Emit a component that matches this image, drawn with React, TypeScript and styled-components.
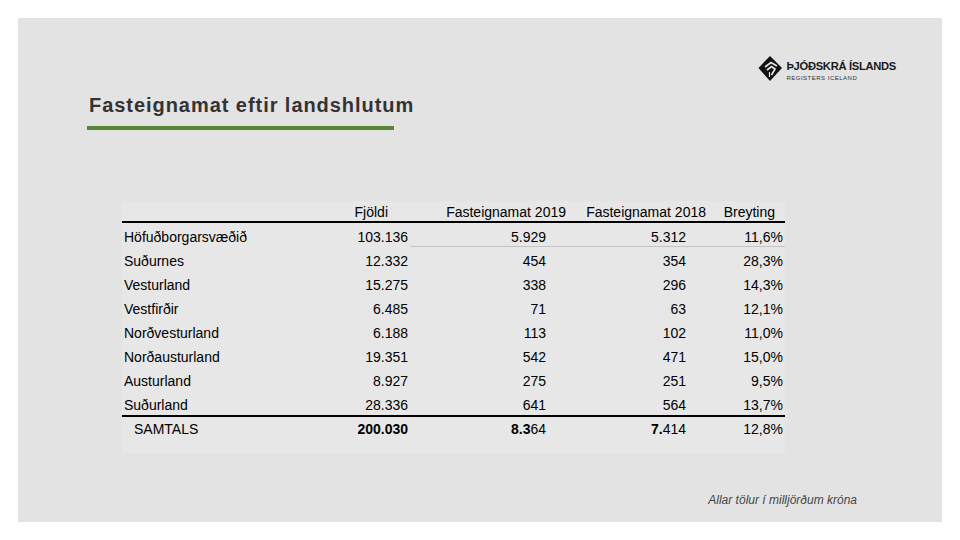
import React from "react";
import styled, { createGlobalStyle } from "styled-components";

const GlobalStyle = createGlobalStyle`
  html, body {
    margin: 0;
    padding: 0;
    background: #ffffff;
  }
  body {
    font-family: "Liberation Sans", Arial, sans-serif;
  }
`;

const Page = styled("div")`
  width: 960px;
  height: 540px;
  padding: 18px;
  box-sizing: border-box;
`;

const Slide = styled("div")`
  width: 924px;
  height: 504px;
  background: #e3e3e3;
  display: flex;
  flex-direction: column;
`;

const TopBar = styled("div")`
  display: flex;
  justify-content: flex-end;
  padding: 37px 46px 0 0;
  height: 27px;
`;

const Logo = styled("div")`
  display: flex;
  align-items: center;
  gap: 3px;
`;

const LogoText = styled("div")`
  display: flex;
  flex-direction: column;
  padding-top: 4px;
  color: #1a1a1a;
`;

const LogoName = styled("span")`
  font-size: 11.2px;
  font-weight: bold;
  letter-spacing: -0.3px;
  line-height: 12px;
`;

const LogoSub = styled("span")`
  font-size: 6px;
  letter-spacing: 0.5px;
  line-height: 8px;
  margin-top: 2px;
  color: #333;
`;

const TitleBlock = styled("div")`
  margin: 12px 0 0 69px;
`;

const Title = styled("h1")`
  margin: 0;
  font-size: 20px;
  line-height: 22px;
  font-weight: bold;
  letter-spacing: 0.95px;
  color: #333333;
  padding-left: 2px;
`;

const GreenBar = styled("div")`
  width: 307px;
  height: 4px;
  margin-top: 10px;
  background: #5b8639;
`;

const Table = styled("div")`
  margin: 71px 0 0 104px;
  width: 663px;
  padding-bottom: 12px;
  background: #e7e7e7;
  color: #000;
  font-size: 14px;
`;

const Row = styled("div")<{ $rule?: boolean; $head?: boolean }>`
  display: grid;
  grid-template-columns: 178px 110px 138px 140px 97px;
  height: ${(p) => (p.$head ? "20px" : "24px")};
  border-bottom: ${(p) => (p.$rule ? "2px solid #000" : "none")};
`;

const Cell = styled("div")<{ $label?: boolean; $indent?: number; $underline?: boolean; $top?: number }>`
  text-align: ${(p) => (p.$label ? "left" : "right")};
  padding: ${(p) => p.$top ?? 4}px 2px 0 ${(p) => (p.$label ? 2 + (p.$indent || 0) : 2)}px;
  line-height: 20px;
  white-space: nowrap;
  box-shadow: ${(p) => (p.$underline ? "inset 0 -1px 0 #c4c4c4" : "none")};
`;

const HeadCell = styled("div")<{ $nudge: number }>`
  text-align: right;
  padding: 3px 2px 0 0;
  line-height: 17px;
  white-space: nowrap;
  margin-right: ${(p) => -p.$nudge}px;
`;

const Strong = styled("b")`
  font-weight: bold;
`;

const Footer = styled("div")`
  margin-top: auto;
  align-self: flex-end;
  padding: 0 85px 15px 0;
  font-size: 12px;
  font-style: italic;
  color: #444;
`;

const LogoMark: React.FC = () => (
  <svg width="25" height="27" viewBox="0 0 25 27">
    <polygon points="12,1 24,13 12,26 0.5,13" fill="#111" />
    <path d="M7 12 L13 7.5 L19 11" stroke="#e3e3e3" strokeWidth="1.7" fill="none" />
    <path d="M9 15 L13.5 11.5 L17 14 L13.5 20" stroke="#e3e3e3" strokeWidth="1.7" fill="none" />
    <path d="M11.5 17 L11.5 22" stroke="#e3e3e3" strokeWidth="1.2" fill="none" />
  </svg>
);

type Region = {
  name: string;
  count: string;
  y2019: string;
  y2018: string;
  change: string;
};

const regions: Region[] = [
  { name: "Höfuðborgarsvæðið", count: "103.136", y2019: "5.929", y2018: "5.312", change: "11,6%" },
  { name: "Suðurnes", count: "12.332", y2019: "454", y2018: "354", change: "28,3%" },
  { name: "Vesturland", count: "15.275", y2019: "338", y2018: "296", change: "14,3%" },
  { name: "Vestfirðir", count: "6.485", y2019: "71", y2018: "63", change: "12,1%" },
  { name: "Norðvesturland", count: "6.188", y2019: "113", y2018: "102", change: "11,0%" },
  { name: "Norðausturland", count: "19.351", y2019: "542", y2018: "471", change: "15,0%" },
  { name: "Austurland", count: "8.927", y2019: "275", y2018: "251", change: "9,5%" },
  { name: "Suðurland", count: "28.336", y2019: "641", y2018: "564", change: "13,7%" },
];

const App: React.FC = () => {
  return (
    <Page>
      <GlobalStyle />
      <Slide>
        <TopBar>
          <Logo>
            <LogoMark />
            <LogoText>
              <LogoName>ÞJÓÐSKRÁ ÍSLANDS</LogoName>
              <LogoSub>REGISTERS ICELAND</LogoSub>
            </LogoText>
          </Logo>
        </TopBar>

        <TitleBlock>
          <Title>Fasteignamat eftir landshlutum</Title>
          <GreenBar />
        </TitleBlock>

        <Table>
          <Row $head $rule>
            <div />
            <HeadCell $nudge={-20}>Fjöldi</HeadCell>
            <HeadCell $nudge={20}>Fasteignamat 2019</HeadCell>
            <HeadCell $nudge={20}>Fasteignamat 2018</HeadCell>
            <HeadCell $nudge={-8}>Breyting</HeadCell>
          </Row>
          {regions.map((r, i) => (
            <Row key={r.name} $rule={i === regions.length - 1}>
              <Cell $label>{r.name}</Cell>
              <Cell>{r.count}</Cell>
              <Cell $underline={i === 0}>{r.y2019}</Cell>
              <Cell $underline={i === 0}>{r.y2018}</Cell>
              <Cell $underline={i === 0}>{r.change}</Cell>
            </Row>
          ))}
          <Row>
            <Cell $label $indent={10} $top={2}>SAMTALS</Cell>
            <Cell $top={2}>
              <Strong>200.030</Strong>
            </Cell>
            <Cell $top={2}>
              <Strong>8.3</Strong>64
            </Cell>
            <Cell $top={2}>
              <Strong>7.</Strong>414
            </Cell>
            <Cell $top={2}>12,8%</Cell>
          </Row>
        </Table>

        <Footer>Allar tölur í milljörðum króna</Footer>
      </Slide>
    </Page>
  );
};

export default App;
